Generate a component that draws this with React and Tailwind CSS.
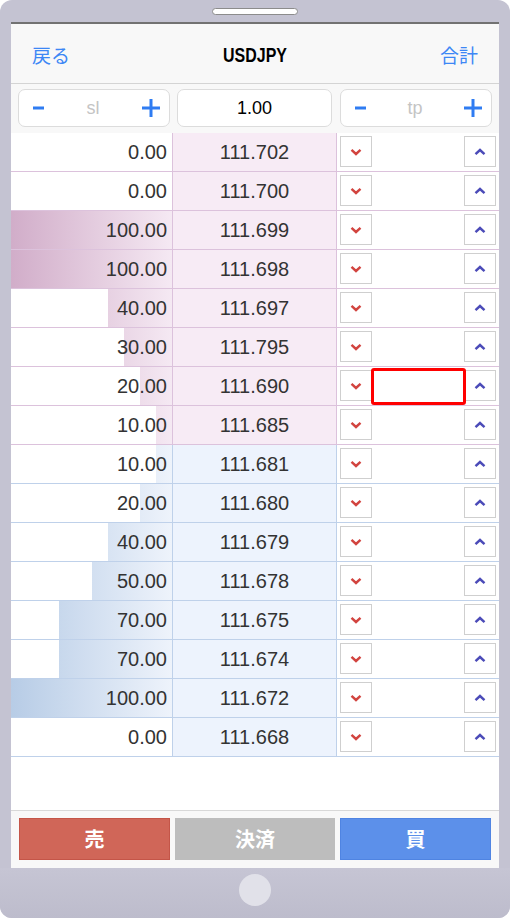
const sans = { fontFamily: '"Liberation Sans", Arial, "Noto Sans CJK JP", sans-serif' };
const jp = { fontFamily: '"Noto Sans CJK JP", "Liberation Sans", sans-serif' };

// depth ladder: [volume, price, side]
const rows = [
  [0, "111.702", "ask"],
  [0, "111.700", "ask"],
  [100, "111.699", "ask"],
  [100, "111.698", "ask"],
  [40, "111.697", "ask"],
  [30, "111.795", "ask"],
  [20, "111.690", "ask", true],
  [10, "111.685", "ask"],
  [10, "111.681", "bid"],
  [20, "111.680", "bid"],
  [40, "111.679", "bid"],
  [50, "111.678", "bid"],
  [70, "111.675", "bid"],
  [70, "111.674", "bid"],
  [100, "111.672", "bid"],
  [0, "111.668", "bid"],
];

const Minus = () => (
  <svg width="12" height="4" viewBox="0 0 12 4">
    <rect x="0" y="0.5" width="11" height="3" fill="#2f7cf2" />
  </svg>
);

const Plus = () => (
  <svg width="20" height="20" viewBox="0 0 20 20">
    <path d="M10 1v18M1 10h18" stroke="#2f7cf2" strokeWidth="3" />
  </svg>
);

const ChevronDown = () => (
  <svg width="12" height="8" viewBox="0 0 12 8">
    <path d="M1.5 1.8L6 6l4.5-4.2" fill="none" stroke="#d2443f" strokeWidth="2.4" />
  </svg>
);

const ChevronUp = () => (
  <svg width="12" height="8" viewBox="0 0 12 8">
    <path d="M1.5 6.2L6 2l4.5 4.2" fill="none" stroke="#4b4bb8" strokeWidth="2.4" />
  </svg>
);

const Stepper = ({ label }) => (
  <div className="h-[38px] w-[152px] rounded-[7px] border border-[#dcdcdc] bg-white flex items-center justify-between pl-[14px] pr-[8px]">
    <Minus />
    <span className="text-[18px] text-[#c4c4c4]" style={sans}>
      {label}
    </span>
    <Plus />
  </div>
);

const LadderRow = ({ volume, price, side, selected }) => {
  const ask = side === "ask";
  const line = ask ? "border-[#dcc2dc]" : "border-[#bfd1ea]";
  return (
    <div className={`grid grid-cols-[162px_164px_162px] h-[39px] border-b ${line}`}>
      <div
        className={`relative border-r ${line} flex items-center justify-end pr-[5px] ${
          ask
            ? "bg-gradient-to-r from-[#d1adc9] to-[#f5e9f3]"
            : "bg-gradient-to-r from-[#b7cce6] to-[#eef3fb]"
        }`}
      >
        <div className="absolute left-0 top-0 bottom-0 bg-white" style={{ width: `${100 - volume}%` }} />
        <span className="relative text-[20px] text-[#333]" style={sans}>
          {volume.toFixed(2)}
        </span>
      </div>
      <div
        className={`border-r ${line} flex items-center justify-center ${
          ask ? "bg-[#f7ebf5]" : "bg-[#edf3fd]"
        }`}
      >
        <span className="text-[20px] text-[#333]" style={sans}>
          {price}
        </span>
      </div>
      <div className="relative bg-white flex justify-between px-[3px] pt-[3px]">
        <button className="w-[32px] h-[31px] border border-[#cfcfcf] bg-white flex items-center justify-center">
          <ChevronDown />
        </button>
        <button className="w-[32px] h-[31px] border border-[#cfcfcf] bg-white flex items-center justify-center">
          <ChevronUp />
        </button>
        {selected && (
          <div className="absolute left-[34px] top-[1px] w-[95px] h-[37px] border-[3px] border-[#ff0000] rounded-[3px]" />
        )}
      </div>
    </div>
  );
};

export default function App() {
  return (
    <div className="w-[510px] h-[918px] bg-[#c4c3d2] rounded-[12px] flex flex-col overflow-hidden">
      {/* speaker slot */}
      <div className="h-[22px] flex justify-center pt-[8px]">
        <div className="w-[86px] h-[7px] rounded-full bg-white border border-[#8c8c8c]" />
      </div>

      <div className="mx-[11px] flex flex-col bg-white border-t-2 border-[#727272]">
        {/* nav bar */}
        <div className="h-[60px] bg-[#f8f8f8] border-b border-[#d4d4d4] flex items-center justify-between px-[21px] pt-[3px]">
          <span className="text-[19px] text-[#3d87f5]" style={jp}>
            戻る
          </span>
          <span className="inline-block text-[21px] font-bold text-black scale-x-[0.76]" style={sans}>
            USDJPY
          </span>
          <span className="text-[19px] text-[#3d87f5]" style={jp}>
            合計
          </span>
        </div>

        {/* sl / lot / tp */}
        <div className="h-[49px] bg-[#f8f8f8] flex items-start pt-[5px] pl-[7px] gap-[7px]">
          <Stepper label="sl" />
          <div className="h-[38px] w-[155px] rounded-[7px] border border-[#dcdcdc] bg-white flex items-center justify-center">
            <span className="text-[18px] text-black" style={sans}>
              1.00
            </span>
          </div>
          <div className="ml-[1px]">
            <Stepper label="tp" />
          </div>
        </div>

        {/* ladder */}
        <div className="flex flex-col">
          {rows.map(([v, p, s, sel], i) => (
            <LadderRow key={i} volume={v} price={p} side={s} selected={sel} />
          ))}
        </div>
        <div className="h-[53px] bg-white" />

        {/* order buttons */}
        <div className="h-[58px] bg-[#f8f8f8] border-t border-[#d8d8d8] flex items-start pt-[7px] px-[8px] gap-[5px]">
          <button className="w-[151px] h-[42px] bg-[#d06658] border border-[#c45548] flex items-center justify-center">
            <span className="text-[20px] font-bold text-white" style={jp}>
              売
            </span>
          </button>
          <button className="w-[160px] h-[42px] bg-[#bdbdbd] flex items-center justify-center">
            <span className="text-[20px] font-bold text-white" style={jp}>
              決済
            </span>
          </button>
          <button className="w-[151px] h-[42px] bg-[#5c90ea] border border-[#4f84e2] flex items-center justify-center">
            <span className="text-[20px] font-bold text-white" style={jp}>
              買
            </span>
          </button>
        </div>
      </div>

      {/* home button */}
      <div className="flex-1 flex justify-center pt-[6px] bg-gradient-to-b from-[#c6c5d4] to-[#bdbccc]">
        <div className="w-[32px] h-[32px] rounded-full bg-[#e1e1e9]" />
      </div>
    </div>
  );
}
